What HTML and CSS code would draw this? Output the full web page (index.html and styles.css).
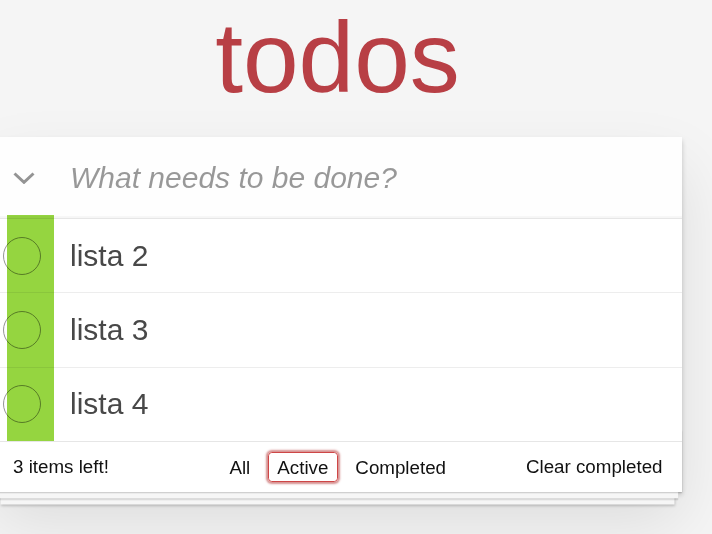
FILE: index.html
```html
<!DOCTYPE html>
<html lang="en">
<head>
<meta charset="utf-8">
<title>todos</title>
<link rel="stylesheet" href="styles.css">
</head>
<body>
<section class="todoapp">
  <header class="header">
    <h1 class="title">todos</h1>
  </header>
  <div class="card">
    <div class="entry">
      <span class="toggle-all" aria-label="Mark all as complete">
        <svg width="22" height="12" viewBox="0 0 22 12"><polyline points="1.5,1.5 11,10.3 20.5,1.5" fill="none" stroke="#949494" stroke-width="3"/></svg>
      </span>
      <input class="new-todo" placeholder="What needs to be done?">
    </div>
    <section class="main">
      <ul class="todo-list">
        <li class="todo"><span class="toggle"><span class="circle"></span></span><label class="todo-label">lista 2</label></li>
        <li class="todo"><span class="toggle"><span class="circle"></span></span><label class="todo-label">lista 3</label></li>
        <li class="todo"><span class="toggle"><span class="circle"></span></span><label class="todo-label">lista 4</label></li>
      </ul>
      <div class="highlight"></div>
    </section>
    <footer class="footer">
      <span class="todo-count">3 items left!</span>
      <ul class="filters"><li class="filter"><a class="filter-link" href="#/">All</a></li><li class="filter"><a class="filter-link selected" href="#/active">Active</a></li><li class="filter"><a class="filter-link" href="#/completed">Completed</a></li></ul>
      <button class="clear-completed">Clear completed</button>
    </footer>
  </div>
</section>
</body>
</html>
```
FILE: styles.css
```css
html, body {
  margin: 0;
  padding: 0;
}

body {
  min-height: 100vh;
  background: #f5f5f5;
  font-family: "Liberation Sans", Arial, Helvetica, sans-serif;
  color: #111;
  line-height: 1.4em;
}

.todoapp {
  width: 689px;
  margin: 0 0 0 -7px;
  padding-bottom: 20px;
}

.title {
  margin: 0;
  font-size: 100px;
  line-height: 115px;
  font-weight: 400;
  color: #b83f45;
  text-align: center;
}

.card {
  margin-top: 22px;
  background: #fff;
  position: relative;
  box-shadow: 0 2.5px 5px 0 rgba(0, 0, 0, 0.2), 0 31px 62px 0 rgba(0, 0, 0, 0.1);
}

.entry {
  position: relative;
}

.new-todo {
  display: block;
  width: 100%;
  box-sizing: border-box;
  height: 81px;
  margin: 0;
  padding: 20px 20px 20px 77px;
  border: none;
  outline: none;
  font-family: inherit;
  font-size: 30px;
  line-height: 42px;
  color: #484848;
  background: rgba(0, 0, 0, 0.003);
  box-shadow: inset 0 -2px 1px rgba(0, 0, 0, 0.03);
}

.new-todo::placeholder {
  font-style: italic;
  color: rgba(0, 0, 0, 0.4);
}

.toggle-all {
  position: absolute;
  left: 0;
  top: 0;
  width: 61px;
  height: 81px;
  display: flex;
  align-items: center;
  justify-content: center;
}

.toggle-all svg {
  display: block;
  margin-top: 1px;
}

.main {
  position: relative;
  border-top: 1px solid #e6e6e6;
}

.todo-list {
  margin: 0;
  padding: 0;
  list-style: none;
}

.todo {
  display: flex;
  align-items: center;
  border-bottom: 1px solid #ededed;
  font-size: 30px;
}

.todo:last-child {
  border-bottom: none;
}

.toggle {
  flex: none;
  width: 77px;
  box-sizing: border-box;
  padding-left: 10px;
  display: flex;
  align-items: center;
}

.circle {
  width: 38px;
  height: 38px;
  box-sizing: border-box;
  border: 1px solid #949494;
  border-radius: 50%;
}

.todo-label {
  display: block;
  flex: 1;
  padding: 18.625px 18.75px 18.625px 0;
  line-height: 36px;
  color: #484848;
}

.highlight {
  position: absolute;
  top: -4px;
  bottom: 0;
  left: 14px;
  width: 47px;
  background: #95d540;
  mix-blend-mode: multiply;
}

.footer {
  position: relative;
  display: grid;
  grid-template-columns: 1fr auto 1fr;
  align-items: center;
  height: 25px;
  padding: 12.5px 19.5px 12.5px 20px;
  border-top: 1px solid #e6e6e6;
  font-size: 18.75px;
  line-height: 26.25px;
}

.footer::before {
  content: '';
  position: absolute;
  right: 0;
  bottom: 0;
  left: 0;
  height: 62px;
  overflow: hidden;
  pointer-events: none;
  box-shadow: 0 1.25px 1.25px rgba(0, 0, 0, 0.2),
              0 10px 0 -3.75px #f6f6f6,
              0 11.25px 1.25px -3.75px rgba(0, 0, 0, 0.2),
              0 20px 0 -7.5px #f6f6f6,
              0 21.25px 2.5px -7.5px rgba(0, 0, 0, 0.2);
}

.todo-count {
  justify-self: start;
}

.filters {
  margin: 0;
  padding: 0;
  list-style: none;
  white-space: nowrap;
}

.filter {
  display: inline;
}

.filter-link {
  margin: 0 3.75px;
  padding: 3.75px 8.75px;
  border: 1px solid transparent;
  border-radius: 3.75px;
  color: inherit;
  text-decoration: none;
}

.filter-link.selected {
  border-color: #ce4646;
  box-shadow: 0 0 2px 2px rgba(207, 125, 125, 0.85);
}

.clear-completed {
  justify-self: end;
  margin: 0;
  padding: 0;
  border: none;
  background: none;
  font-family: inherit;
  font-size: inherit;
  line-height: inherit;
  color: inherit;
  cursor: pointer;
}
```
